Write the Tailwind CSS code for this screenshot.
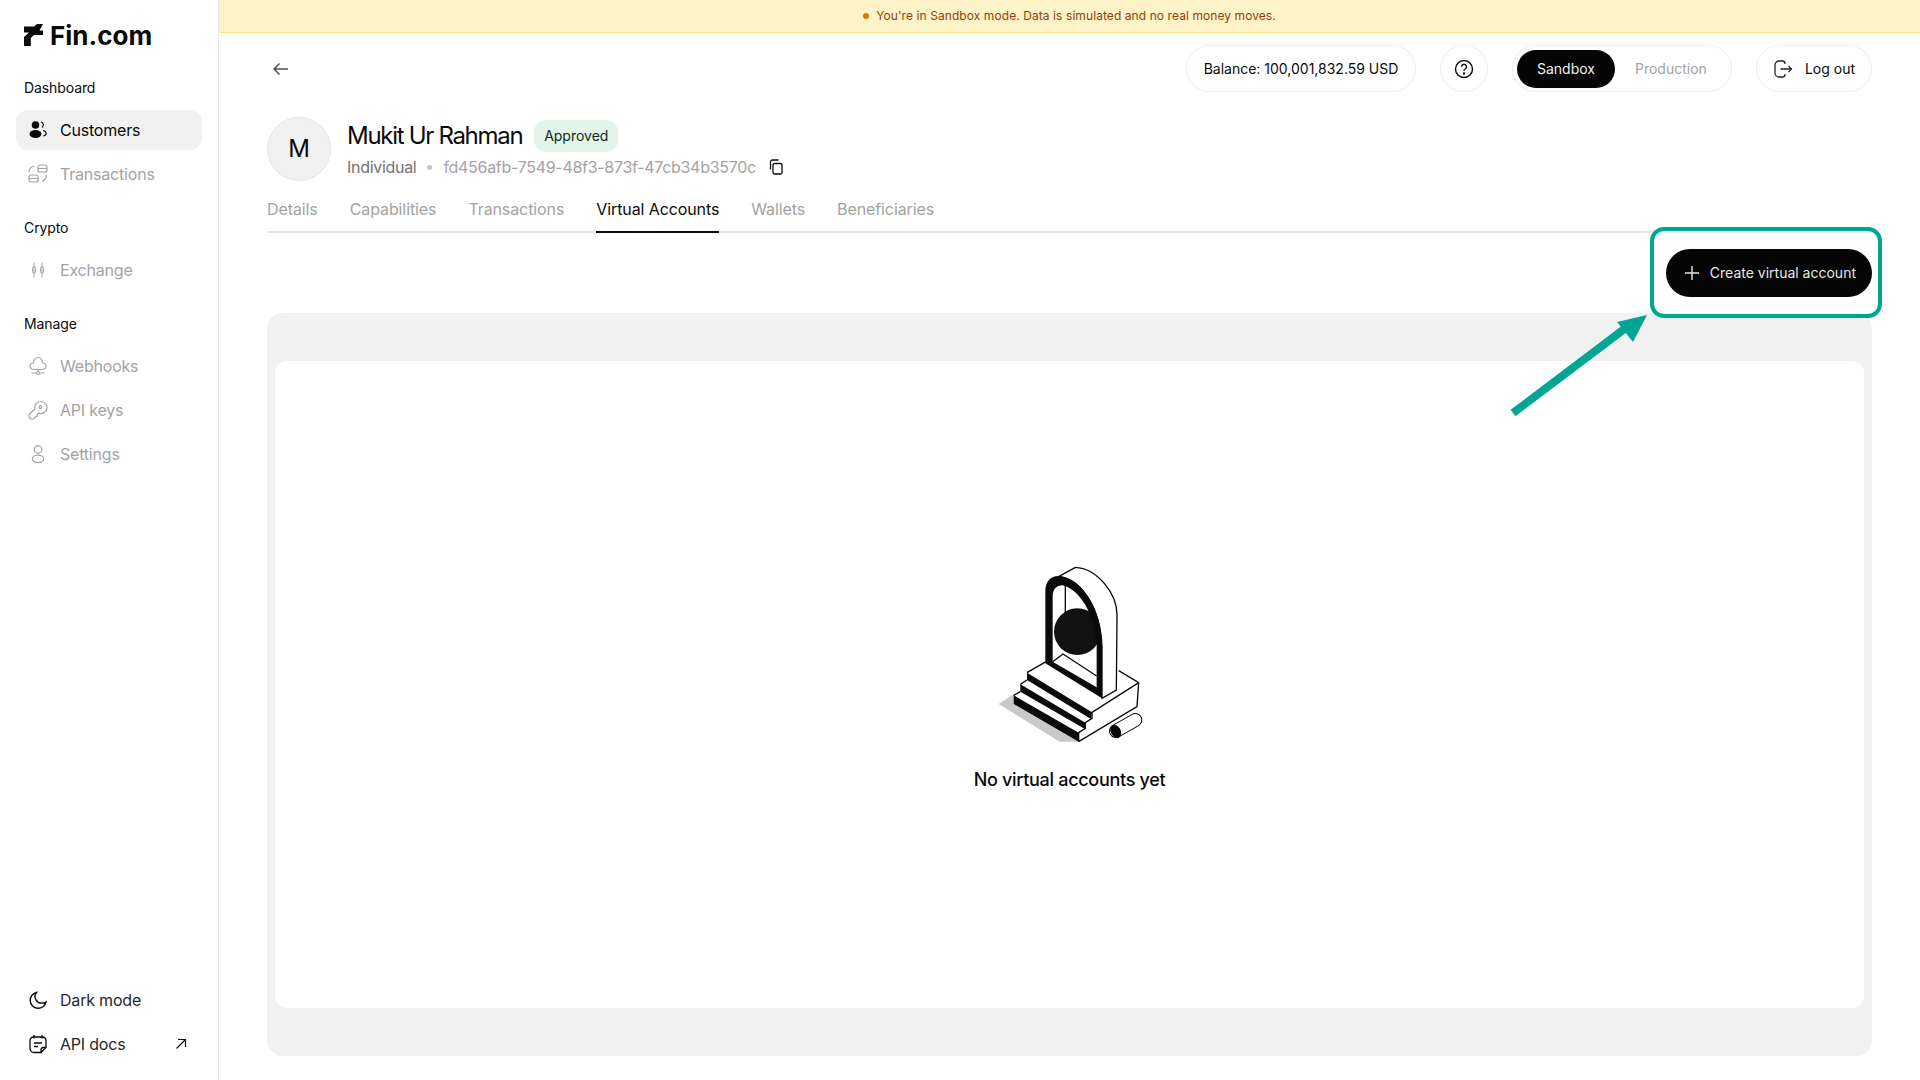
<!DOCTYPE html>
<html lang="en">
<head>
    <meta charset="UTF-8">
    <title>Fin.com - Customer</title>
    <script src="https://cdn.jsdelivr.net/npm/@tailwindcss/browser@4"></script>
</head>
<body class="font-['Inter',sans-serif] bg-white text-[#0a0a0a] h-[1080px] overflow-hidden">
<div class="flex h-[1080px] relative">
    <!-- Sidebar -->
    <aside class="w-[219px] shrink-0 border-r border-[#e8e8e8] flex flex-col px-4 pt-6 pb-4">
        <div class="flex items-center gap-[7px] pl-2 h-[22px]">
            <svg width="19" height="22" viewBox="0 0 19 22" class="shrink-0"><path d="M0 2.500H10L13 0h6l-3.500 6.500H19V11H10L6.800 14v8H0v-9l5-4.500H0z" fill="#0a0a0a"/></svg>
            <span class="text-[26px] font-bold leading-none pt-[2px]">Fin.com</span>
        </div>

        <div class="text-sm pl-2 mt-[32px] leading-5 tracking-[-0.1px]">Dashboard</div>
        <nav class="mt-[12px] flex flex-col gap-1 tracking-[-0.2px]">
            <a class="flex items-center gap-[12px] h-10 rounded-xl bg-[#f1f1f1] px-3">
                <svg width="20" height="20" viewBox="0 0 20 20"><circle cx="7.500" cy="5" r="3.800" fill="#0a0a0a"/><ellipse cx="7.500" cy="14" rx="6" ry="4" fill="#0a0a0a"/><path d="M13 2a3 3 0 0 1 1 5.500M15 10.500c2.500 .5 3.500 2 3 3.500-.3 1-1.300 1.700-2.500 2" fill="none" stroke="#0a0a0a" stroke-width="1.200"/></svg>
                Customers
            </a>
            <a class="flex items-center gap-[12px] h-10 px-3 text-[#a3a3a3]">
                <svg width="20" height="20" viewBox="0 0 20 20" fill="none" stroke="#a3a3a3" stroke-width="1.200"><rect x="10" y="1" width="9" height="7" rx="2"/><rect x="1" y="11" width="9" height="7" rx="2"/><path d="M10 4.500h9M1 14.500h9M1 8c0-3 1.500-5 5-6M18.500 11c0 3-1.500 5-4.500 6.500"/></svg>
                Transactions
            </a>
        </nav>

        <div class="text-sm pl-2 mt-[24px] leading-5 tracking-[-0.1px]">Crypto</div>
        <nav class="mt-[12px] tracking-[-0.2px]">
            <a class="flex items-center gap-[12px] h-10 px-3 text-[#a3a3a3]">
                <svg width="20" height="20" viewBox="0 0 20 20" fill="none" stroke="#a3a3a3" stroke-width="1"><rect x="4.500" y="7" width="3" height="6" rx="1.500"/><rect x="12.500" y="7" width="3" height="6" rx="1.500"/><path d="M6 2.500v15M14 2.500v15"/></svg>
                Exchange
            </a>
        </nav>

        <div class="text-sm pl-2 mt-[24px] leading-5 tracking-[-0.1px]">Manage</div>
        <nav class="mt-[12px] flex flex-col gap-1 tracking-[-0.2px]">
            <a class="flex items-center gap-[12px] h-10 px-3 text-[#a3a3a3]">
                <svg width="20" height="20" viewBox="0 0 20 20" fill="none" stroke="#a3a3a3" stroke-width="1.200"><path d="M6.500 13.500C3.500 13.500 2 12 2 10S3.500 7 5.500 7C5.500 4 7.500 1.500 10 1.500S14.500 4 14.500 7C16.500 7 18 8 18 10S16.500 13.500 13.500 13.500Z"/><path d="M3.500 17h13M10 13.500v2"/><circle cx="10" cy="17" r="1.500" fill="#fff"/></svg>
                Webhooks
            </a>
            <a class="flex items-center gap-[12px] h-10 px-3 text-[#a3a3a3]">
                <svg width="20" height="20" viewBox="0 0 20 20" fill="none" stroke="#a3a3a3" stroke-width="1.200"><path d="M12.500 1.500a6 6 0 0 1 1 12c-1 .2-2.200 0-3-.5l-1.500 1.500v2l-2 .5-1 1.500c-1.500 1-4 .5-5-1.500-.5-1.500 0-2.500 1-3.500l5-4.500c-.8-3.500 1.500-7.500 5.500-7.500z"/><circle cx="12.500" cy="7" r="1.300"/></svg>
                API keys
            </a>
            <a class="flex items-center gap-[12px] h-10 px-3 text-[#a3a3a3]">
                <svg width="20" height="20" viewBox="0 0 20 20" fill="none" stroke="#a3a3a3" stroke-width="1.200"><circle cx="10" cy="5.500" r="3.800"/><ellipse cx="10" cy="14.800" rx="5.700" ry="3.700"/></svg>
                Settings
            </a>
        </nav>

        <nav class="mt-auto flex flex-col gap-1 tracking-[-0.2px]">
            <a class="flex items-center gap-[12px] h-10 px-3 text-[#262626]">
                <svg width="20" height="20" viewBox="0 0 20 20" fill="none" stroke="#0a0a0a" stroke-width="1.400"><path d="M8.500 2.500A8 8 0 1 0 18 12c-1 .8-2.300 1-3.500 1A6.500 6.500 0 0 1 8.500 2.500z"/></svg>
                Dark mode
            </a>
            <a class="flex items-center gap-[12px] h-10 px-3 text-[#262626]">
                <svg width="20" height="20" viewBox="0 0 20 20" fill="none" stroke="#0a0a0a" stroke-width="1.300"><path d="M13 18.500H6a4 4 0 0 1-4-4V6.500a3.500 3.500 0 0 1 3.500-3.500h9A3.500 3.500 0 0 1 18 6.500V13.500z"/><path d="M6 1v3.500M14 1v3.500M6 9h8M6 12.500h4M13 18.500v-2.500a2.500 2.500 0 0 1 2.500-2.500H18"/></svg>
                API docs
                <svg width="12" height="12" viewBox="0 0 12 12" fill="none" stroke="#0a0a0a" stroke-width="1.200" class="ml-auto mr-[3px]"><path d="M1.500 10.500l9-9M3 1.500h7.500V9"/></svg>
            </a>
        </nav>
    </aside>

    <!-- Main -->
    <main class="flex-1 flex flex-col min-w-0">
        <div class="h-[33px] shrink-0 bg-[#fef3c7] border-b border-[#fde68a] flex items-center justify-center gap-[7px] text-xs text-[#92400e] tracking-[0.08px]">
            <span class="w-[6px] h-[6px] rounded-full bg-[#d97706]"></span>
            You're in Sandbox mode. Data is simulated and no real money moves.
        </div>

        <div class="px-12 flex-1 flex flex-col min-h-0">
            <!-- Top bar -->
            <header class="flex items-center h-[47px] mt-3 shrink-0">
                <svg width="20" height="20" viewBox="0 0 20 20" fill="none" stroke="#525252" stroke-width="1.500" class="ml-[4px]"><path d="M17 10H3M8.500 4.500L3 10l5.500 5.500"/></svg>
                <div class="ml-auto h-full rounded-full border border-[#ededed] flex items-center text-sm w-[230px] justify-center whitespace-nowrap">Balance: 100,001,832.59 USD</div>
                <button class="ml-6 w-12 h-full rounded-full border border-[#ededed] flex items-center justify-center">
                    <svg width="20" height="20" viewBox="0 0 20 20" fill="none" stroke="#0a0a0a" stroke-width="1.400"><circle cx="10" cy="10" r="8.500"/><path d="M7.500 7.800a2.500 2.500 0 1 1 3.800 2.200c-.9.500-1.300 1-1.300 1.800"/><circle cx="10" cy="14.500" r=".5" fill="#0a0a0a"/></svg>
                </button>
                <div class="ml-6 w-[220px] h-full rounded-full border border-[#ededed] flex items-center pl-[4px] text-sm">
                    <span class="w-[98px] h-[38px] rounded-full bg-[#050505] text-[#f0f0f0] flex items-center justify-center">Sandbox</span>
                    <span class="ml-[20px] text-[#a3a3a3]">Production</span>
                </div>
                <button class="ml-6 w-[116px] h-full rounded-full border border-[#ededed] flex items-center justify-center gap-[12px] text-sm">
                    <svg width="20" height="20" viewBox="0 0 20 20" fill="none" stroke="#262626" stroke-width="1.300"><path d="M12 5V4.500A2.500 2.500 0 0 0 9.500 2H6a4 4 0 0 0-4 4v8a4 4 0 0 0 4 4h3.500a2.500 2.500 0 0 0 2.500-2.500V15M7.500 10h11M15.500 7l3 3-3 3"/></svg>
                    Log out
                </button>
            </header>

            <!-- Customer -->
            <section class="flex items-start gap-4 mt-[25px] shrink-0">
                <div class="w-16 h-16 rounded-full bg-[#f1f1f1] border border-[#e5e5e5] flex items-center justify-center text-2xl">M</div>
                <div class="pt-[3px]">
                    <div class="flex items-center gap-3 h-[32px]">
                        <h1 class="text-[24px] font-normal tracking-[-1.3px] leading-8">Mukit Ur Rahman</h1>
                        <span class="h-8 w-[84px] justify-center rounded-xl bg-[#e3f3e9] text-[#0f2a1a] text-sm flex items-center">Approved</span>
                    </div>
                    <div class="flex items-center mt-[3px] h-6 text-[#737373] tracking-[-0.3px]">
                        <span>Individual</span>
                        <span class="w-[5px] h-[5px] rounded-full bg-[#c4c4c4] mx-[11px]"></span>
                        <span class="text-[#a3a3a3]">fd456afb-7549-48f3-873f-47cb34b3570c</span>
                        <svg width="16" height="16" viewBox="0 0 16 16" fill="none" stroke="#0a0a0a" stroke-width="1.300" class="ml-3"><rect x="5" y="4.500" width="9" height="10.500" rx="1.500"/><path d="M2.500 10.500V3a2 2 0 0 1 2-2h6"/></svg>
                    </div>
                </div>
            </section>

            <!-- Tabs -->
            <nav class="flex gap-8 border-b-2 border-[#e8e8e8] mt-[9px] h-[43px] shrink-0 text-[#a3a3a3] tracking-[-0.1px]">
                <a class="leading-[38px]">Details</a>
                <a class="leading-[38px]">Capabilities</a>
                <a class="leading-[38px]">Transactions</a>
                <a class="leading-[38px] h-[43px] text-[#0a0a0a] border-b-2 border-[#0a0a0a]">Virtual Accounts</a>
                <a class="leading-[38px]">Wallets</a>
                <a class="leading-[38px]">Beneficiaries</a>
            </nav>

            <div class="flex justify-end mt-4 shrink-0 relative z-10">
                <button class="h-12 w-[206px] rounded-full bg-[#050505] text-[#e8e8e8] text-sm flex items-center justify-end pr-4 gap-[11px]">
                    <svg width="14" height="14" viewBox="0 0 14 14" stroke="#e8e8e8" stroke-width="1.400"><path d="M7 0v14M0 7h14"/></svg>
                    Create virtual account
                </button>
            </div>

            <!-- Empty state -->
            <section class="mt-4 h-[743px] shrink-0 rounded-2xl bg-[#f1f1f1] px-2 pt-12 pb-12 flex">
                <div class="flex-1 bg-white rounded-xl flex flex-col items-center pt-[189px]">
                    <svg width="190" height="200" viewBox="-16 0 570 600">
                        <polygon points="55,462 100,432 295,575 238,575" fill="#c9c9c9"/>
                        <!-- right face and top of plinth -->
                        <path d="M140,368 L245,305 L475,398 L470,470 L295,575 L100,462 L100,432 L120,405 L140,390Z" fill="#fff"/>
                        <path d="M415,362 L475,398 L470,470 L295,575 M475,398 L335,487 M335,487 L335,505 L315,518 L315,535 L295,548 L295,575" fill="none" stroke="#0a0a0a" stroke-width="4"/>
                        <!-- steps -->
                        <polygon points="140,368 140,390 332,507 335,487" fill="#0a0a0a"/>
                        <polygon points="120,403 120,425 314,537 315,518" fill="#0a0a0a"/>
                        <polygon points="100,436 100,462 295,575 295,548" fill="#0a0a0a"/>
                        <path d="M140,368 L197,335" stroke="#0a0a0a" stroke-width="4"/>
                        <path d="M140,390 L120,403 M120,425 L100,436" stroke="#0a0a0a" stroke-width="4"/>
                        <!-- arch depth -->
                        <path d="M235,80 L285,52 C350,55 410,130 410,195 L408,420 L365,445 L365,290 C360,170 300,85 235,80Z" fill="#fff" stroke="#0a0a0a" stroke-width="4"/>
                        <!-- arch opening -->
                        <path d="M217,335 L217,140 C217,118 228,106 247,106 C298,118 345,195 349,285 L349,412Z" fill="#fff"/>
                        <path d="M255,105 V190" stroke="#0a0a0a" stroke-width="4"/>
                        <path d="M217,335 L248,312 L349,378" fill="none" stroke="#0a0a0a" stroke-width="4"/>
                        <circle cx="291" cy="245" r="70" fill="#111"/>
                        <!-- arch front rim -->
                        <path fill-rule="evenodd" d="M195,340 L195,125 C195,95 210,78 235,78 C300,85 365,170 365,290 L365,445 Z M217,335 L349,412 L349,285 C345,195 298,118 247,106 C228,106 217,118 217,140 Z" fill="#0a0a0a"/>
                        <!-- cylinder -->
                        <path d="M407,543 L465,510" stroke="#0a0a0a" stroke-width="42" stroke-linecap="round"/>
                        <path d="M407,543 L465,510" stroke="#fff" stroke-width="36" stroke-linecap="round"/>
                        <ellipse cx="406" cy="544" rx="15" ry="21" transform="rotate(-30 406 544)" fill="#0a0a0a"/>
                    </svg>
                    <p class="mt-[16px] text-lg font-medium leading-7 tracking-[-0.3px]">No virtual accounts yet</p>
                </div>
            </section>
        </div>
    </main>

    <!-- Annotation over the page -->
    <div class="absolute left-[1650px] top-[227px] w-[232px] h-[91px] rounded-[14px] border-[4px] border-[#00a693]"></div>
    <svg class="absolute left-[1505px] top-[310px]" width="150" height="110" viewBox="0 0 150 110">
        <path d="M8 103L122 17" stroke="#00a693" stroke-width="8"/>
        <polygon points="142,5 112,12 128,32" fill="#00a693"/>
    </svg>
</div>
</body>
</html>
